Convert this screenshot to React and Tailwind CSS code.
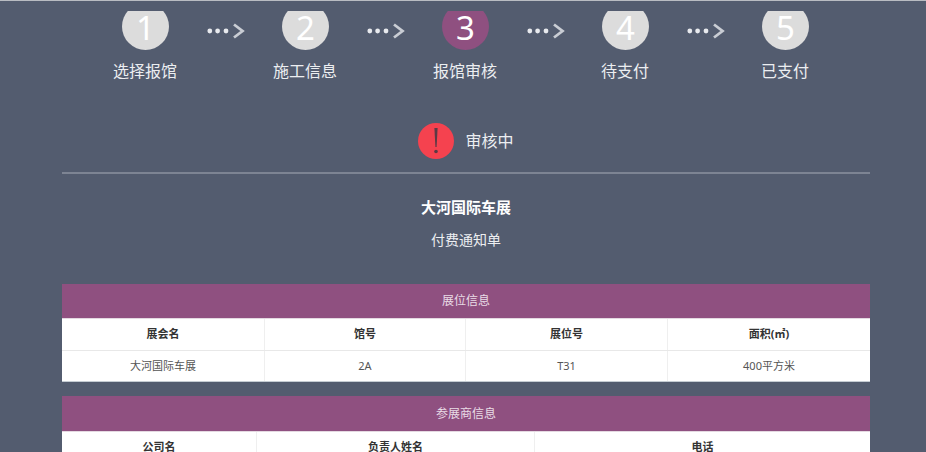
import React from "react";

const font = { fontFamily: '"Noto Sans", "Noto Sans CJK SC", sans-serif' };

const steps = [
  { num: 1, label: "选择报馆" },
  { num: 2, label: "施工信息" },
  { num: 3, label: "报馆审核", active: true },
  { num: 4, label: "待支付" },
  { num: 5, label: "已支付" },
];

function Arrow() {
  return (
    <svg width="38" height="16" viewBox="0 0 38 16" className="shrink-0 ml-[38px] mt-[12px] -mr-[20px]">
      <circle cx="2.8" cy="8" r="2.4" fill="#e8eaee" />
      <circle cx="10.6" cy="8" r="2.4" fill="#e8eaee" />
      <circle cx="19" cy="8" r="2.4" fill="#e8eaee" />
      <path d="M27 1.5 L35.5 8 L27 14.5" fill="none" stroke="#c9cdd4" strokeWidth="2.8" />
    </svg>
  );
}

function Step({ num, label, active, last }) {
  return (
    <div className="w-[160px] shrink-0 flex flex-col">
      <div className="flex h-[39px] pl-[57px]">
        <div className="relative w-[47px] h-[39px] shrink-0">
          {/* circle is cut off by the top of the panel */}
          <div className="w-[47px] h-[39px] overflow-hidden flex items-end">
            <div className={"w-[47px] h-[47px] rounded-full shrink-0 " + (active ? "bg-[#8f5080]" : "bg-[#dcdcdc]")} />
          </div>
          <span className="absolute inset-0 flex items-center justify-center pb-[6px] text-white text-[33px] leading-[33px]">
            {num}
          </span>
        </div>
        {!last && <Arrow />}
      </div>
      <div className="mt-[9px] text-center text-[16px] leading-[24px] text-[#eceef1]">{label}</div>
    </div>
  );
}

function InfoTable({ title, cols, columns, rows, headerClass }) {
  return (
    <div className="w-[808px]">
      <div className={"bg-[#8f5080] text-[#e9dce6] text-[12px] flex items-center justify-center " + headerClass}>{title}</div>
      <div className="bg-white border-t border-[#e4d9e1] border-b-[#c5ccd3] border-b">
        <div className={"grid h-[31px] " + cols}>
          {columns.map((c) => (
            <div key={c} className="flex items-center justify-center text-[11px] font-bold text-[#333333] border-r border-[#efefef] last:border-r-0">
              {c}
            </div>
          ))}
        </div>
        {rows.map((row, i) => (
          <div key={i} className={"grid h-[31px] border-t border-[#e8e8e8] " + cols}>
            {row.map((c) => (
              <div key={c} className="flex items-center justify-center text-[11px] text-[#555555] border-r border-[#efefef] last:border-r-0">
                {c}
              </div>
            ))}
          </div>
        ))}
      </div>
    </div>
  );
}

export default function App() {
  return (
    <div style={font} className="w-[926px] h-[452px] overflow-hidden bg-[#535c6f] border-t border-[#b9bcc2] flex flex-col">
      <div className="flex pl-[65px] pt-[10px]">
        {steps.map((s, i) => (
          <Step key={s.num} {...s} last={i === steps.length - 1} />
        ))}
      </div>

      <div className="ml-[62px] w-[808px] flex flex-col">
        <div className="mt-[39px] flex items-center justify-center gap-[11px] h-[38px]">
          <div className="w-[36px] h-[36px] rounded-full bg-[#f5424f] flex items-center justify-center">
            <svg width="8" height="28" viewBox="0 0 8 28">
              <path d="M2.4 1 L5.6 1 L4.6 20 L3.4 20 Z" fill="#5c3a45" />
              <circle cx="4" cy="24.5" r="1.8" fill="#5c3a45" />
            </svg>
          </div>
          <span className="text-[16px] leading-[26px] text-[#eceef1]">审核中</span>
        </div>

        <div className="mt-[12px] h-[2px] bg-[#7d8493]" />

        <div className="mt-[22px] text-center text-[15px] leading-[22px] font-bold text-white">大河国际车展</div>
        <div className="mt-[11px] text-center text-[14px] leading-[22px] text-[#eceef1]">付费通知单</div>

        <div className="mt-[33px] flex flex-col gap-[14px]">
          <InfoTable
            title="展位信息"
            headerClass="h-[34px]"
            cols="grid-cols-[203px_201px_202px_202px]"
            columns={["展会名", "馆号", "展位号", "面积(㎡)"]}
            rows={[["大河国际车展", "2A", "T31", "400平方米"]]}
          />
          <InfoTable
            title="参展商信息"
            headerClass="h-[35px]"
            cols="grid-cols-[195px_278px_335px]"
            columns={["公司名", "负责人姓名", "电话"]}
            rows={[]}
          />
        </div>
      </div>
    </div>
  );
}
